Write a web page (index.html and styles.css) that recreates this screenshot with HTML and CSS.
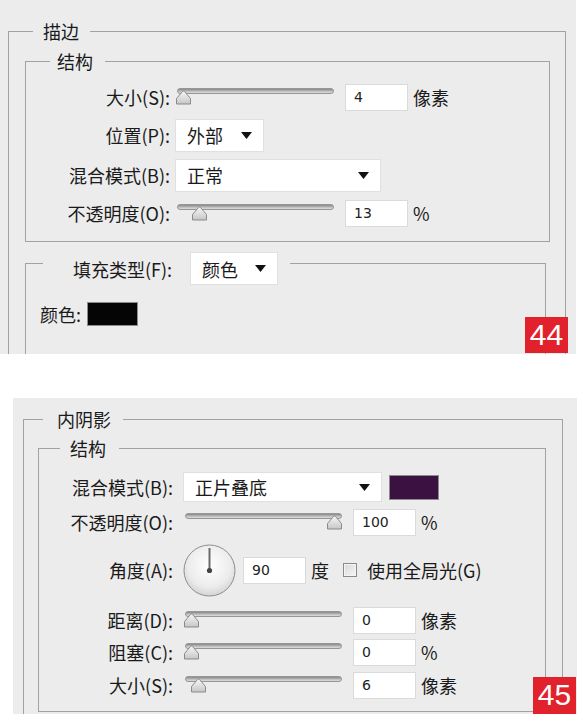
FILE: index.html
```html
<!DOCTYPE html>
<html lang="zh-CN">
<head>
    <meta charset="UTF-8">
    <title>描边 / 内阴影</title>
    <link rel="stylesheet" href="styles.css">
</head>
<body>

    <!-- 44: stroke -->
    <div class="panel panel-stroke">
        <fieldset class="group outer-a">
            <legend class="leg-a">描边</legend>
            <fieldset class="group inner-a">
                <legend class="leg-b">结构</legend>
                <div class="row h36">
                    <span class="lbl w144">大小(S):</span>
                    <div class="slider">
                        <div class="track"></div>
                        <svg class="thumb" style="left:0px" width="17" height="16" viewBox="0 0 17 16"><path d="M1.5 15 V9.5 L7.5 2.5 Q8.5 1.5 9.5 2.5 L15.5 9.5 V15 Z" fill="url(#tg)" stroke="#8a8a8a" stroke-linejoin="round"/></svg>
                    </div>
                    <span class="num">4</span>
                    <span class="unit">像素</span>
                </div>
                <div class="row h40">
                    <span class="lbl w144">位置(P):</span>
                    <div class="select w89">外部<svg class="arrow" width="11" height="7" viewBox="0 0 11 7"><path d="M0 0 H11 L5.5 7 Z" fill="#111"/></svg></div>
                </div>
                <div class="row h40">
                    <span class="lbl w144">混合模式(B):</span>
                    <div class="select w206">正常<svg class="arrow" width="11" height="7" viewBox="0 0 11 7"><path d="M0 0 H11 L5.5 7 Z" fill="#111"/></svg></div>
                </div>
                <div class="row h36">
                    <span class="lbl w144">不透明度(O):</span>
                    <div class="slider">
                        <div class="track"></div>
                        <svg class="thumb" style="left:16px" width="17" height="16" viewBox="0 0 17 16"><path d="M1.5 15 V9.5 L7.5 2.5 Q8.5 1.5 9.5 2.5 L15.5 9.5 V15 Z" fill="url(#tg)" stroke="#8a8a8a" stroke-linejoin="round"/></svg>
                    </div>
                    <span class="num">13</span>
                    <span class="unit">%</span>
                </div>
            </fieldset>
            <fieldset class="group fill">
                <legend class="leg-fill">
                    <span>填充类型(F):</span>
                    <div class="select w88">颜色<svg class="arrow" width="11" height="7" viewBox="0 0 11 7"><path d="M0 0 H11 L5.5 7 Z" fill="#111"/></svg></div>
                </legend>
                <div class="row h36">
                    <span>颜色:</span>
                    <span class="swatch swatch-black"></span>
                </div>
            </fieldset>
        </fieldset>
        <div class="badge badge-44">44</div>
    </div>

    <!-- 45: inner shadow -->
    <div class="panel panel-shadow">
        <fieldset class="group outer-b">
            <legend class="leg-c">内阴影</legend>
            <fieldset class="group inner-b">
                <legend class="leg-d">结构</legend>
                <div class="row h34">
                    <span class="lbl w134">混合模式(B):</span>
                    <div class="select w199">正片叠底<svg class="arrow" width="11" height="7" viewBox="0 0 11 7"><path d="M0 0 H11 L5.5 7 Z" fill="#111"/></svg></div>
                    <span class="swatch swatch-purple"></span>
                </div>
                <div class="row h36">
                    <span class="lbl w134">不透明度(O):</span>
                    <div class="slider">
                        <div class="track"></div>
                        <svg class="thumb" style="left:143px" width="17" height="16" viewBox="0 0 17 16"><path d="M1.5 15 V9.5 L7.5 2.5 Q8.5 1.5 9.5 2.5 L15.5 9.5 V15 Z" fill="url(#tg)" stroke="#8a8a8a" stroke-linejoin="round"/></svg>
                    </div>
                    <span class="num">100</span>
                    <span class="unit">%</span>
                </div>
                <div class="row h60">
                    <span class="lbl w134">角度(A):</span>
                    <svg class="dial" width="53" height="53" viewBox="0 0 53 53">
                        <defs>
                            <radialGradient id="dg" cx="50%" cy="40%" r="60%">
                                <stop offset="0" stop-color="#ffffff"/>
                                <stop offset="0.7" stop-color="#ececec"/>
                                <stop offset="1" stop-color="#d4d4d4"/>
                            </radialGradient>
                        </defs>
                        <circle cx="26.5" cy="26.5" r="25.5" fill="url(#dg)" stroke="#8d8d8d"/>
                        <line x1="26.5" y1="26.5" x2="26.5" y2="4" stroke="#6a6a6a" stroke-width="2"/>
                        <circle cx="26.5" cy="26.5" r="2.6" fill="#444"/>
                    </svg>
                    <span class="num num-angle">90</span>
                    <span class="unit">度</span>
                    <span class="check"></span>
                    <span class="check-text">使用全局光(G)</span>
                </div>
                <div class="row h32 first-small">
                    <span class="lbl w134">距离(D):</span>
                    <div class="slider">
                        <div class="track"></div>
                        <svg class="thumb" style="left:0px" width="17" height="16" viewBox="0 0 17 16"><path d="M1.5 15 V9.5 L7.5 2.5 Q8.5 1.5 9.5 2.5 L15.5 9.5 V15 Z" fill="url(#tg)" stroke="#8a8a8a" stroke-linejoin="round"/></svg>
                    </div>
                    <span class="num">0</span>
                    <span class="unit">像素</span>
                </div>
                <div class="row h32">
                    <span class="lbl w134">阻塞(C):</span>
                    <div class="slider">
                        <div class="track"></div>
                        <svg class="thumb" style="left:0px" width="17" height="16" viewBox="0 0 17 16"><path d="M1.5 15 V9.5 L7.5 2.5 Q8.5 1.5 9.5 2.5 L15.5 9.5 V15 Z" fill="url(#tg)" stroke="#8a8a8a" stroke-linejoin="round"/></svg>
                    </div>
                    <span class="num">0</span>
                    <span class="unit">%</span>
                </div>
                <div class="row h34">
                    <span class="lbl w134">大小(S):</span>
                    <div class="slider">
                        <div class="track"></div>
                        <svg class="thumb" style="left:7px" width="17" height="16" viewBox="0 0 17 16"><path d="M1.5 15 V9.5 L7.5 2.5 Q8.5 1.5 9.5 2.5 L15.5 9.5 V15 Z" fill="url(#tg)" stroke="#8a8a8a" stroke-linejoin="round"/></svg>
                    </div>
                    <span class="num">6</span>
                    <span class="unit">像素</span>
                </div>
            </fieldset>
        </fieldset>
        <div class="badge badge-45">45</div>
    </div>

    <!-- shared gradient for slider thumbs -->
    <svg class="defs" width="0" height="0">
        <defs>
            <linearGradient id="tg" x1="0" y1="0" x2="0" y2="1">
                <stop offset="0" stop-color="#f7f7f7"/>
                <stop offset="1" stop-color="#c6c6c6"/>
            </linearGradient>
        </defs>
    </svg>

</body>
</html>
```

FILE: styles.css
```css
* {
    box-sizing: border-box;
}
body {
    margin: 0;
    background: #ffffff;
    font-family: "Noto Sans CJK SC", "Noto Sans", sans-serif;
    font-size: 18px;
    color: #1a1a1a;
}
.panel {
    position: relative;
    overflow: hidden;
    background: #ececec;
}
.panel-stroke {
    width: 576px;
    height: 354px;
    padding: 20px 10px 0 8px;
}
.panel-shadow {
    width: 564px;
    height: 316px;
    margin: 44px 0 0 13px;
    padding: 10px 14px 0 10px;
}

/* group boxes */
.group {
    margin: 0;
    padding: 0;
    min-width: 0;
    border: 1px solid #a2a2a2;
}
.group > legend {
    padding: 0;
    line-height: 22px;
}
.outer-a {
    height: 420px;
    padding: 0 15px 0 16px;
}
.leg-a {
    margin-left: 8px;
    padding: 0 11px 0 10px !important;
}
.inner-a {
    margin-top: 8px;
    padding: 7px 0 10px 0;
}
.leg-b {
    margin-left: 24px;
    padding: 0 12px 0 7px !important;
}
.fill {
    margin-right: 4px;
    height: 160px;
    padding: 11px 0 0 14px;
}
.leg-fill {
    display: flex;
    align-items: center;
    margin-left: 3px;
    padding: 10px 12px 0 30px !important;
}
.leg-fill .select {
    margin-left: 18px;
}
.outer-b {
    height: 420px;
    padding: 0 16px 0 14px;
}
.leg-c {
    margin-left: 5px;
    padding: 0 12px 0 14px !important;
}
.inner-b {
    margin-top: 7px;
    padding: 11px 0 9px 0;
}
.leg-d {
    margin-left: 21px;
    padding: 0 13px 0 10px !important;
}

/* rows */
.row {
    display: flex;
    align-items: center;
}
.h32 { height: 32px; }
.h34 { height: 34px; }
.h36 { height: 36px; }
.h40 { height: 40px; }
.h60 { height: 60px; }
.first-small {
    margin-top: 4px;
}
.lbl {
    text-align: right;
    white-space: nowrap;
}
.w144 {
    width: 144px;
    margin-right: 5px;
}
.w134 {
    width: 134px;
    margin-right: 10px;
}

/* controls */
.select {
    display: flex;
    align-items: center;
    justify-content: space-between;
    height: 33px;
    padding: 0 11px 0 11px;
    background: #ffffff;
    border: 1px solid #e0e0e0;
}
.inner-b .select {
    height: 30px;
}
.w88 { width: 88px; }
.w89 { width: 89px; }
.w199 { width: 199px; }
.w206 { width: 206px; }
.arrow {
    display: block;
}
.slider {
    position: relative;
    width: 159px;
    height: 18px;
    align-self: center;
}
.track {
    height: 6px;
    margin-left: 2px;
    border: 1px solid #979797;
    border-radius: 3px;
    background: linear-gradient(#868686, #bdbdbd 55%, #dcdcdc);
}
.thumb {
    position: absolute;
    top: 1px;
}
.num {
    display: flex;
    align-items: center;
    width: 63px;
    height: 27px;
    margin-left: 11px;
    padding-left: 8px;
    background: #ffffff;
    border: 1px solid #dadada;
    font-family: "DejaVu Sans", "Liberation Sans", sans-serif;
    font-size: 14px;
    color: #222;
}
.unit {
    margin-left: 5px;
}
.swatch {
    display: block;
    border: 1px solid #8c8c8c;
}
.swatch-black {
    width: 51px;
    height: 24px;
    margin-left: 6px;
    background: #050505;
}
.swatch-purple {
    width: 50px;
    height: 25px;
    margin-left: 7px;
    background: #3b1142;
}
.dial {
    display: block;
}
.num-angle {
    margin-left: 7px;
}
.check {
    width: 14px;
    height: 14px;
    margin-left: 14px;
    border: 1px solid #8a8a8a;
    background: linear-gradient(135deg, #d9d9d9, #f6f6f6);
    box-shadow: inset 0 0 0 1px #f4f4f4;
}
.check-text {
    margin-left: 10px;
}
.defs {
    position: absolute;
}

/* figure numbers */
.badge {
    position: absolute;
    height: 36px;
    background: #e1212b;
    color: #ffffff;
    font-family: "Liberation Sans", sans-serif;
    font-size: 30px;
    line-height: 36px;
    text-align: center;
}
.badge-44 {
    right: 8px;
    bottom: 1px;
    width: 43px;
}
.badge-45 {
    right: 1px;
    bottom: 0;
    width: 43px;
    height: 37px;
}
```
